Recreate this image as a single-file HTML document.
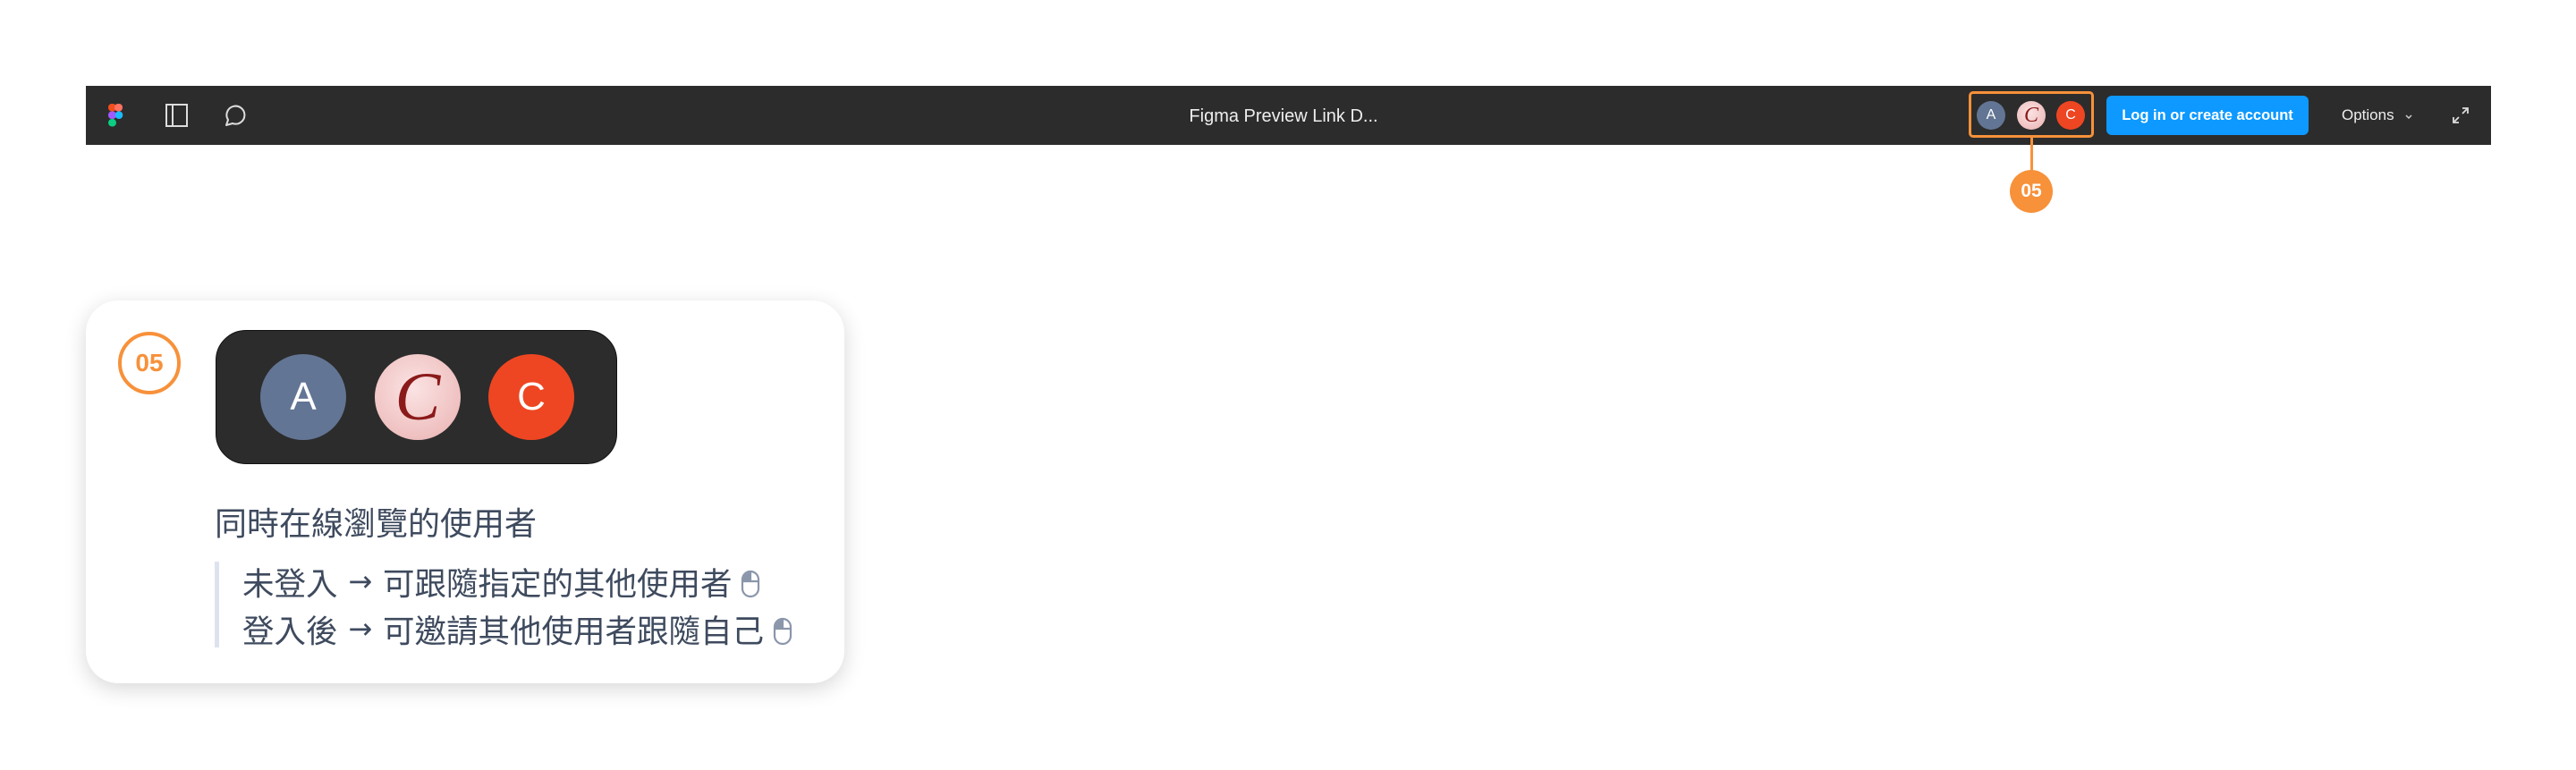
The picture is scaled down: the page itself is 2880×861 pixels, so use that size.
<!DOCTYPE html>
<html><head><meta charset="utf-8"><style>
*{margin:0;padding:0;box-sizing:border-box}
body{width:2880px;height:861px;background:#fff;position:relative;overflow:hidden;font-family:"Liberation Sans","Noto Sans CJK TC",sans-serif}
.bar{position:absolute;left:96px;top:96px;width:2689px;height:66px;background:#2c2c2c}
.abs{position:absolute}
.av{position:absolute;border-radius:50%;color:#fff;display:flex;align-items:center;justify-content:center}
.pink{background:radial-gradient(circle at 45% 40%,#fbe3e3,#efc0c0 70%,#e3a9a9);color:#8b1a1a;font-family:"Liberation Serif",serif;font-style:italic}
.card{position:absolute;left:96px;top:336px;width:848px;height:428px;background:#fff;border-radius:36px;box-shadow:0 6px 24px rgba(0,0,0,0.16)}
.cn{color:#3e4a5e;font-family:"Liberation Sans","Noto Sans CJK TC",sans-serif;white-space:nowrap}
.ar{display:inline-block;position:relative;top:-4px;font-family:"DejaVu Sans",sans-serif;font-size:32px;margin:0 2px}
</style></head><body>
<div class="bar"></div>
<svg class="abs" style="left:121px;top:116px" width="18" height="26" viewBox="0 0 18 26">
<rect x="0" y="0" width="9" height="8.5" rx="4" fill="#f24e1e"/><rect x="7" y="0" width="9" height="8.5" rx="4" fill="#ff7262"/>
<rect x="0" y="8.5" width="9" height="8.5" rx="4" fill="#a259ff"/><circle cx="12" cy="12.7" r="4.3" fill="#1abcfe"/>
<rect x="0" y="17" width="9" height="8.5" rx="4.2" fill="#0acf83"/></svg>
<svg class="abs" style="left:185px;top:115px" width="26" height="28" viewBox="0 0 26 28" fill="none" stroke="#ddd" stroke-width="2"><rect x="1" y="2" width="23" height="24"/><line x1="8" y1="2" x2="8" y2="26"/></svg>
<svg class="abs" style="left:248px;top:116px" width="30" height="28" viewBox="0 0 30 28" fill="none" stroke="#ddd" stroke-width="2"><path d="M5 24 L7 18 A10 10 0 1 1 12 22 Z" stroke-linejoin="round"/></svg>
<div class="abs" style="left:1245px;top:117px;width:380px;text-align:center;color:#eee;font-size:20px;line-height:26px">Figma Preview Link D...</div>
<div class="abs" style="left:2201px;top:102px;width:140px;height:52px;border:3px solid #f7913a;border-radius:5px"></div>
<div class="av" style="left:2210px;top:113px;width:32px;height:32px;background:#637594;font-size:16px">A</div>
<div class="av pink" style="left:2255px;top:113px;width:32px;height:32px;font-size:24px">C</div>
<div class="av" style="left:2299px;top:113px;width:32px;height:32px;background:#ee4622;font-size:16px">C</div>
<div class="abs" style="left:2270px;top:154px;width:3px;height:40px;background:#f7913a"></div>
<div class="av" style="left:2247px;top:190px;width:48px;height:48px;background:#f7913a;font-weight:bold;font-size:21px">05</div>
<div class="abs" style="left:2355px;top:107px;width:226px;height:44px;background:#0d99ff;border-radius:6px;color:#fff;font-weight:bold;font-size:16.5px;line-height:44px;text-align:center">Log in or create account</div>
<div class="abs" style="left:2618px;top:117px;color:#eee;font-size:17px;line-height:24px">Options</div>
<svg class="abs" style="left:2688px;top:127px" width="10" height="8" viewBox="0 0 10 8" fill="none" stroke="#ccc" stroke-width="1.5"><path d="M2 2 L5 5 L8 2"/></svg>
<svg class="abs" style="left:2740px;top:118px" width="22" height="22" viewBox="0 0 22 22" fill="none" stroke="#ddd" stroke-width="1.8"><path d="M13 3 H19 V9 M19 3 L13 9 M3 13 V19 H9 M3 19 L9 13"/></svg>
<div class="card"></div>
<div class="av" style="left:132px;top:371px;width:70px;height:70px;border:4px solid #f7913a;color:#f7913a;font-weight:bold;font-size:28px;background:#fff">05</div>
<div class="abs" style="left:241px;top:369px;width:449px;height:150px;background:#2c2c2c;border-radius:34px;border:1.5px solid #111"></div>
<div class="av" style="left:291px;top:396px;width:96px;height:96px;background:#637594;font-size:44px">A</div>
<div class="av pink" style="left:419px;top:396px;width:96px;height:96px;font-size:76px">C</div>
<div class="av" style="left:546px;top:396px;width:96px;height:96px;background:#ee4622;font-size:44px">C</div>
<div class="abs cn" style="left:240px;top:563px;font-size:36px;line-height:46px">同時在線瀏覽的使用者</div>
<div class="abs" style="left:240px;top:628px;width:5px;height:96px;background:#dde3ee"></div>
<div class="abs cn" style="left:271px;top:630px;font-size:35.5px;line-height:46px">未登入 <span class="ar">→</span> 可跟隨指定的其他使用者 <svg width="22" height="32" viewBox="0 0 22 32" style="vertical-align:-4px" fill="none" stroke="#8a96aa" stroke-width="2.2"><rect x="2" y="2" width="18" height="28" rx="9"/><path d="M11 2 V13 M2 13 H20"/><path d="M11 3 A8 8 0 0 0 3 12 H11Z" fill="#8a96aa" stroke="none"/></svg></div>
<div class="abs cn" style="left:271px;top:683px;font-size:35.5px;line-height:46px">登入後 <span class="ar">→</span> 可邀請其他使用者跟隨自己 <svg width="22" height="32" viewBox="0 0 22 32" style="vertical-align:-4px" fill="none" stroke="#8a96aa" stroke-width="2.2"><rect x="2" y="2" width="18" height="28" rx="9"/><path d="M11 2 V13 M2 13 H20"/><path d="M11 3 A8 8 0 0 0 3 12 H11Z" fill="#8a96aa" stroke="none"/></svg></div>
</body></html>
